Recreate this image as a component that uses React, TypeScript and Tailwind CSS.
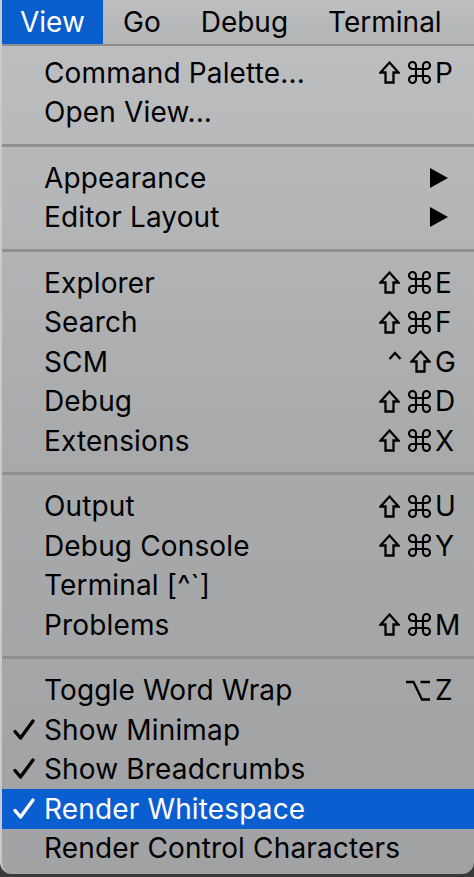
import React from 'react';

type Mod = 'shift' | 'cmd' | 'ctrl' | 'opt';

type Item = {
  label: string;
  mods?: Mod[];
  keyChar?: string;
  submenu?: boolean;
  checked?: boolean;
  active?: boolean;
};

const groups: Item[][] = [
  [
    { label: 'Command Palette...', mods: ['shift', 'cmd'], keyChar: 'P' },
    { label: 'Open View...' },
  ],
  [
    { label: 'Appearance', submenu: true },
    { label: 'Editor Layout', submenu: true },
  ],
  [
    { label: 'Explorer', mods: ['shift', 'cmd'], keyChar: 'E' },
    { label: 'Search', mods: ['shift', 'cmd'], keyChar: 'F' },
    { label: 'SCM', mods: ['ctrl', 'shift'], keyChar: 'G' },
    { label: 'Debug', mods: ['shift', 'cmd'], keyChar: 'D' },
    { label: 'Extensions', mods: ['shift', 'cmd'], keyChar: 'X' },
  ],
  [
    { label: 'Output', mods: ['shift', 'cmd'], keyChar: 'U' },
    { label: 'Debug Console', mods: ['shift', 'cmd'], keyChar: 'Y' },
    { label: 'Terminal [^`]' },
    { label: 'Problems', mods: ['shift', 'cmd'], keyChar: 'M' },
  ],
  [
    { label: 'Toggle Word Wrap', mods: ['opt'], keyChar: 'Z' },
    { label: 'Show Minimap', checked: true },
    { label: 'Show Breadcrumbs', checked: true },
    { label: 'Render Whitespace', checked: true, active: true },
    { label: 'Render Control Characters' },
  ],
];

function ModIcon({ kind }: { kind: Mod }) {
  const s = { fill: 'none', stroke: 'currentColor', strokeWidth: 2.3, strokeLinejoin: 'miter' as const };
  if (kind === 'shift') {
    return (
      <svg width="21" height="23" viewBox="0 0 21 23">
        <path d="M10.5 1.6 L19.5 11.5 L14.5 11.5 L14.5 21.5 L6.5 21.5 L6.5 11.5 L1.5 11.5 Z" {...s} />
      </svg>
    );
  }
  if (kind === 'cmd') {
    return (
      <svg width="23" height="23" viewBox="0 0 23 23">
        <path
          d="M8 8 H15 V15 H8 Z M8 8 V4.5 A3.5 3.5 0 1 0 4.5 8 H8 M15 8 V4.5 A3.5 3.5 0 1 1 18.5 8 H15 M8 15 V18.5 A3.5 3.5 0 1 1 4.5 15 H8 M15 15 V18.5 A3.5 3.5 0 1 0 18.5 15 H15"
          {...s}
          strokeWidth={2.1}
        />
      </svg>
    );
  }
  if (kind === 'ctrl') {
    return (
      <svg width="14" height="23" viewBox="0 0 14 23">
        <path d="M1.5 9 L7 3 L12.5 9" {...s} />
      </svg>
    );
  }
  return (
    <svg width="26" height="23" viewBox="0 0 26 23">
      <path d="M1 3 H8.5 L17 20.5 H25 M15.5 3 H25" {...s} />
    </svg>
  );
}

function Check({ white }: { white?: boolean }) {
  return (
    <svg width="24" height="24" viewBox="0 0 24 24" className="shrink-0">
      <path
        d="M3 13.5 L8.5 20 L21 3"
        fill="none"
        stroke={white ? '#ffffff' : '#000000'}
        strokeWidth="3.4"
        strokeLinecap="round"
        strokeLinejoin="round"
      />
    </svg>
  );
}

function Row({ item }: { item: Item }) {
  const text = item.active ? 'text-white' : 'text-black';
  return (
    <div className={`flex items-center h-[39.5px] pr-[15px] ${item.active ? 'bg-[#0b5ed0]' : ''} ${text}`}>
      <div className="w-[42px] flex items-center justify-end pr-[8px]">
        {item.checked && <Check white={item.active} />}
      </div>
      <span className="flex-1 whitespace-nowrap tracking-[0.15px]">{item.label}</span>
      {item.submenu && (
        <svg width="18" height="20" viewBox="0 0 18 20" className="mr-[11px]">
          <polygon points="0,0 18,10 0,20" fill="#000" />
        </svg>
      )}
      {item.keyChar && (
        <div className="flex items-center">
          <div className="flex items-center justify-end gap-[8px] pr-[4px]">
            {item.mods?.map((m, i) => <ModIcon key={i} kind={m} />)}
          </div>
          <span className="w-[24px] text-left">{item.keyChar}</span>
        </div>
      )}
    </div>
  );
}

export default function App() {
  return (
    <div className="w-[474px] h-[877px] bg-[#3a3a3c] font-['Inter',sans-serif] text-[28px] leading-none">
      <div className="h-[874px] rounded-b-[12px] overflow-hidden border-l-2 border-[#c9cacc] bg-gradient-to-b from-[#bfc0c2] via-[#a9aaac] to-[#a1a2a4] flex flex-col">
        <div className="h-[46px] flex items-stretch bg-gradient-to-b from-[#bdbec0] to-[#b4b5b7] border-b-2 border-[#8c8d8f] text-black">
          <div className="px-[18px] w-[101px] flex items-center bg-[#0a5dcc] text-white">View</div>
          <div className="px-[20px] flex items-center">Go</div>
          <div className="px-[20px] flex items-center">Debug</div>
          <div className="px-[20px] flex items-center">Terminal</div>
        </div>
        <div className="pt-[7px]">
          {groups.map((g, gi) => (
            <div key={gi}>
              {gi > 0 && (
                <div className="h-[26px] flex items-center">
                  <div className="w-full h-[3px] bg-[#8f9092]" />
                </div>
              )}
              {g.map((it) => (
                <Row key={it.label} item={it} />
              ))}
            </div>
          ))}
        </div>
      </div>
    </div>
  );
}
